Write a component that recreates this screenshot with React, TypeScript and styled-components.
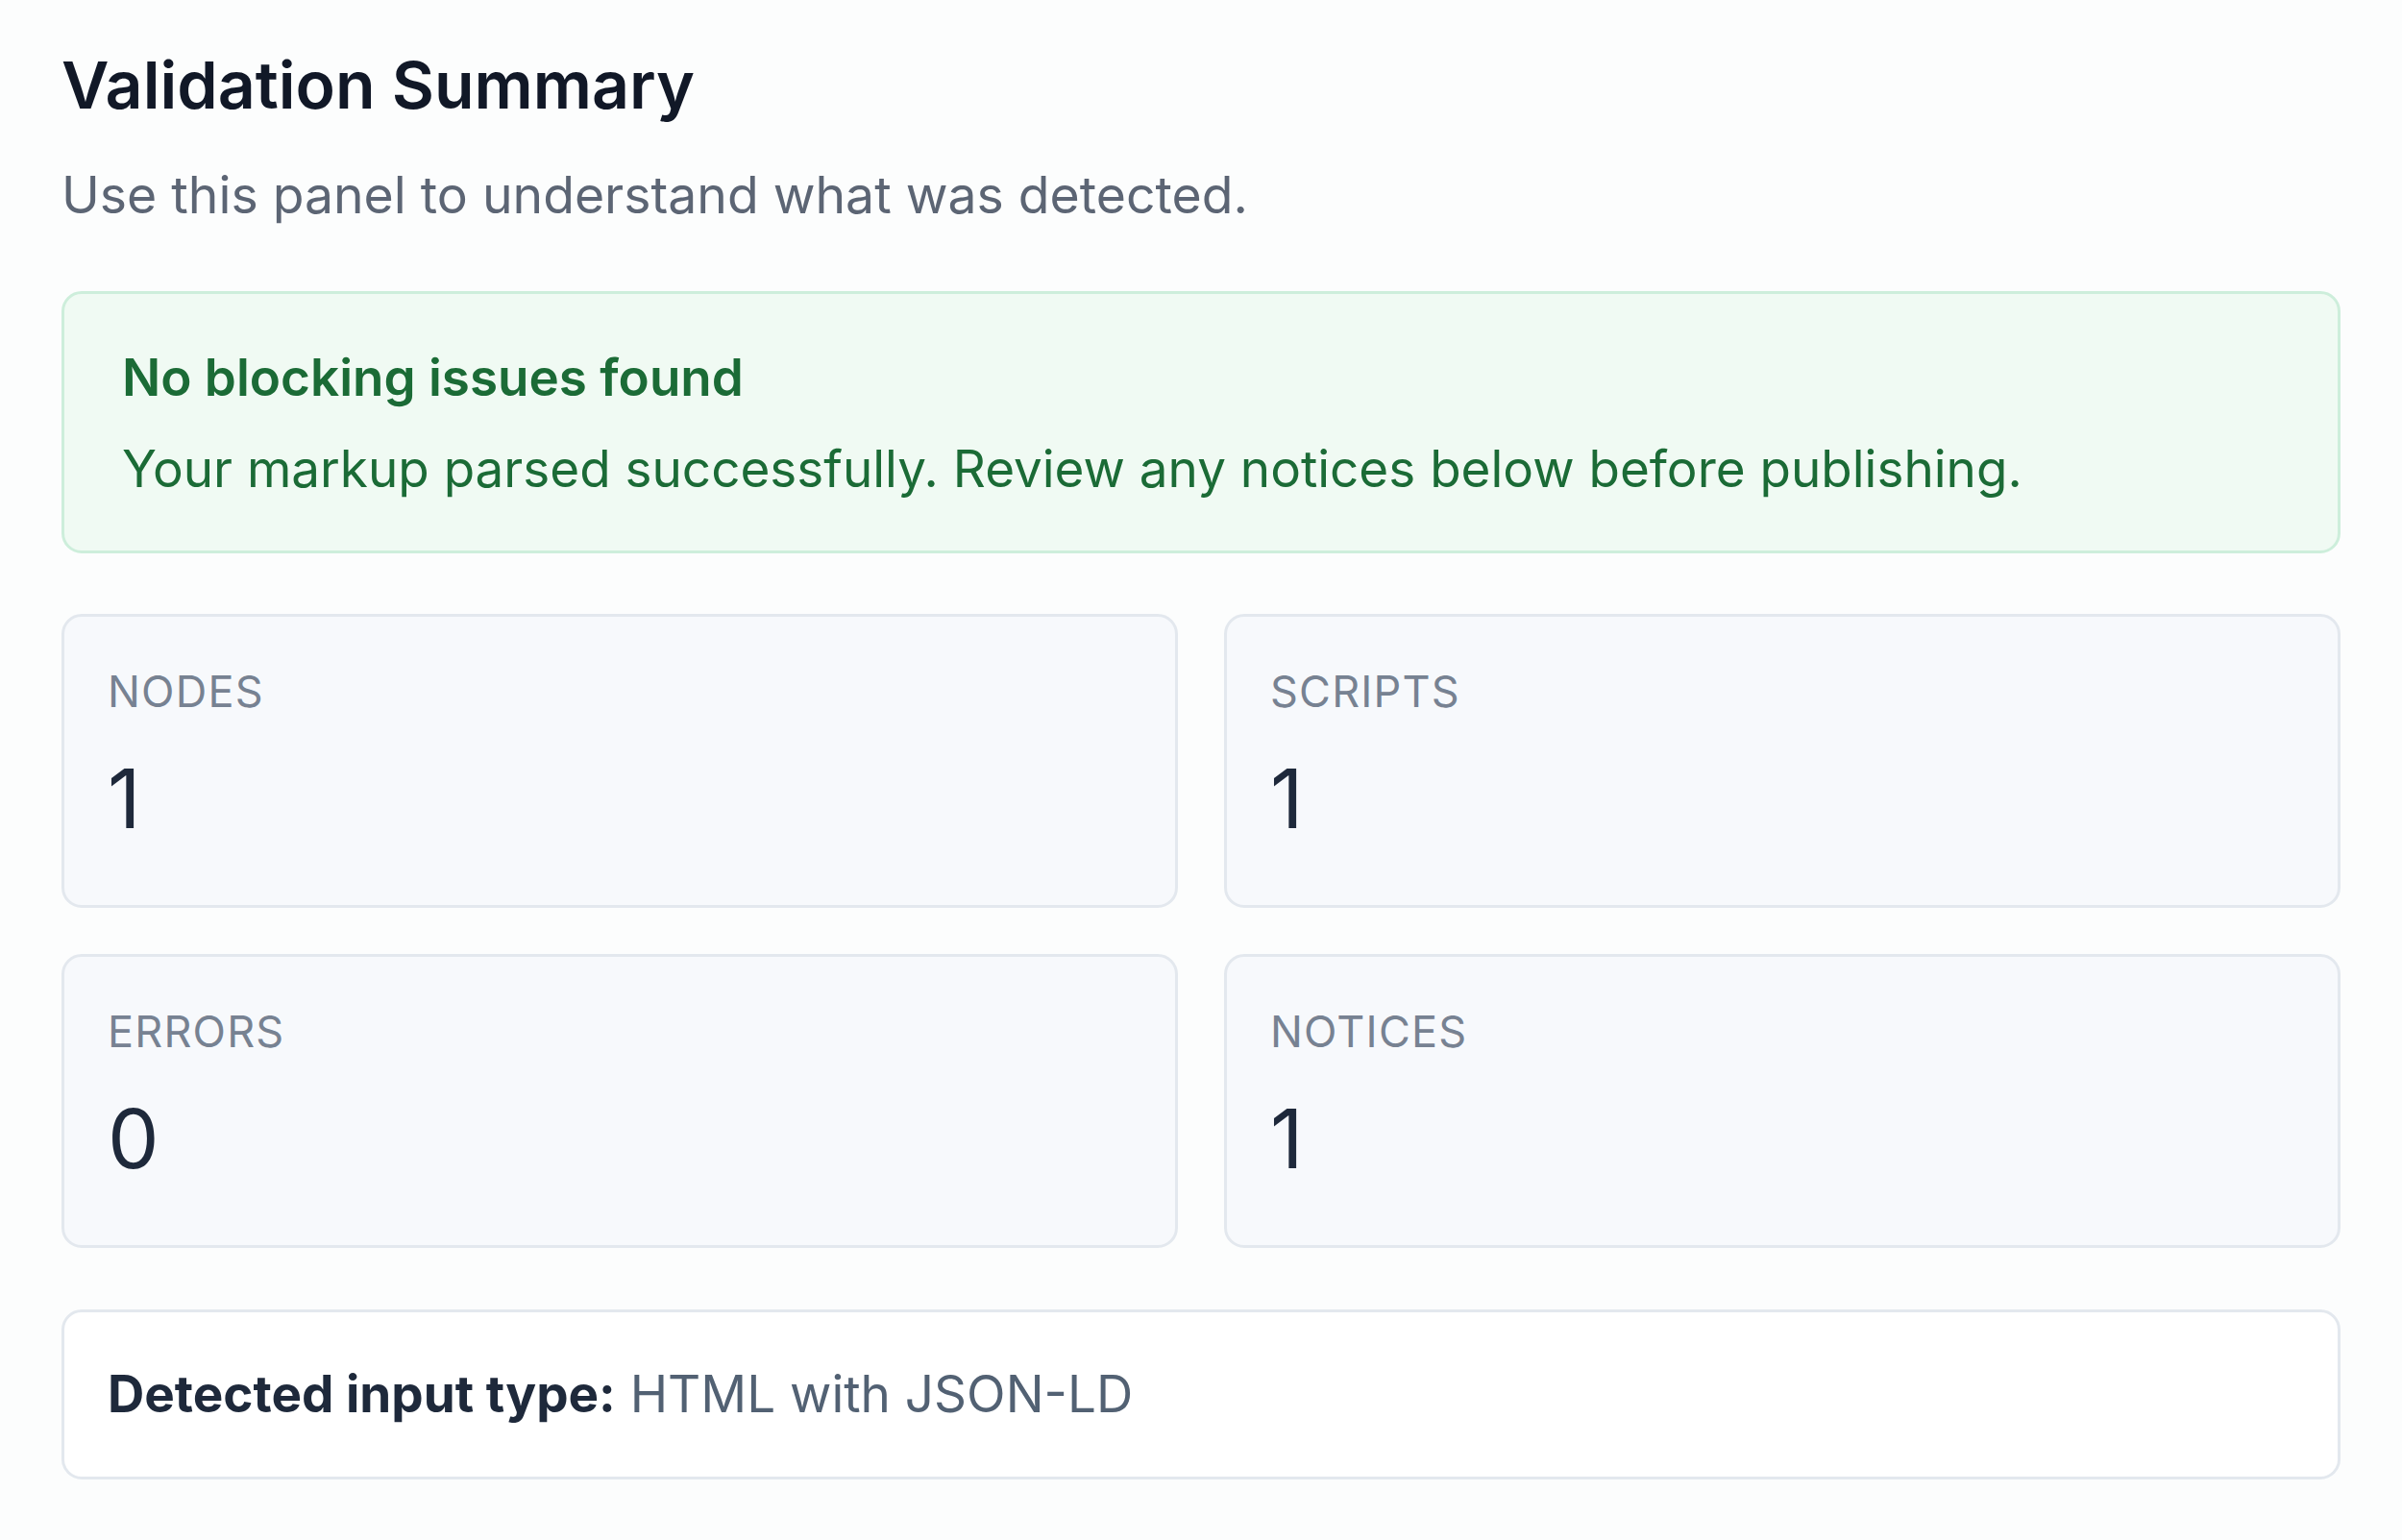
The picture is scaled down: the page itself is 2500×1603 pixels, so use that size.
import { createGlobalStyle, styled } from 'styled-components';

const GlobalStyle = createGlobalStyle`
  * {
    box-sizing: border-box;
  }
  html,
  body {
    margin: 0;
    padding: 0;
    background: #fcfdfd;
  }
  body {
    font-family: Inter, 'Noto Sans', 'Liberation Sans', sans-serif;
    color: #111827;
  }
`;

type Stat = {
  label: string;
  value: number;
};

const stats: Stat[] = [
  { label: 'Nodes', value: 1 },
  { label: 'Scripts', value: 1 },
  { label: 'Errors', value: 0 },
  { label: 'Notices', value: 1 },
];

const App = () => {
  return (
    <>
      <GlobalStyle />
      <S.Page>
        <S.Title>Validation Summary</S.Title>
        <S.Subtitle>Use this panel to understand what was detected.</S.Subtitle>

        <S.Success>
          <S.SuccessTitle>No blocking issues found</S.SuccessTitle>
          <S.SuccessText>
            Your markup parsed successfully. Review any notices below before publishing.
          </S.SuccessText>
        </S.Success>

        <S.StatGrid>
          {stats.map((s) => (
            <S.StatCard key={s.label}>
              <S.StatLabel>{s.label}</S.StatLabel>
              <S.StatValue>{s.value}</S.StatValue>
            </S.StatCard>
          ))}
        </S.StatGrid>

        <S.InfoBox>
          <S.InfoKey>Detected input type:</S.InfoKey> <S.InfoValue>HTML with JSON-LD</S.InfoValue>
        </S.InfoBox>
      </S.Page>
    </>
  );
};

export default App;

const S = {
  Page: styled.main`
    padding: 48px 64px 64px;
  `,
  Title: styled.h1`
    margin: 0;
    font-size: 68px;
    line-height: 80px;
    font-weight: 600;
    color: #111827;
  `,
  Subtitle: styled.p`
    margin: 37px 0 0;
    font-size: 53.5px;
    line-height: 76px;
    color: #5c6574;
  `,
  Success: styled.section`
    margin-top: 62px;
    padding: 48px 60px;
    background: #f0faf3;
    border: 3px solid #cdeedb;
    border-radius: 21px;
    display: flex;
    flex-direction: column;
    gap: 20px;
  `,
  SuccessTitle: styled.h2`
    margin: 0;
    font-size: 53px;
    line-height: 78px;
    font-weight: 600;
    color: #1b6b36;
  `,
  SuccessText: styled.p`
    margin: 0;
    font-size: 53px;
    line-height: 73px;
    color: #1b6b36;
  `,
  StatGrid: styled.div`
    margin-top: 63px;
    display: grid;
    grid-template-columns: 1fr 1fr;
    gap: 48px;
  `,
  StatCard: styled.div`
    padding: 48px 45px;
    background: #f7f9fc;
    border: 3px solid #e3e8ee;
    border-radius: 21px;
    display: flex;
    flex-direction: column;
    gap: 21px;
  `,
  StatLabel: styled.div`
    font-size: 45px;
    line-height: 59px;
    text-transform: uppercase;
    letter-spacing: 1.2px;
    color: #778292;
  `,
  StatValue: styled.div`
    font-size: 85px;
    line-height: 124px;
    color: #1e293b;
  `,
  InfoBox: styled.div`
    margin-top: 64px;
    padding: 48px 45px;
    background: #ffffff;
    border: 3px solid #e3e8ee;
    border-radius: 21px;
    font-size: 53px;
    line-height: 75px;
  `,
  InfoKey: styled.strong`
    font-weight: 700;
    color: #1e293b;
  `,
  InfoValue: styled.span`
    color: #526173;
  `,
};
